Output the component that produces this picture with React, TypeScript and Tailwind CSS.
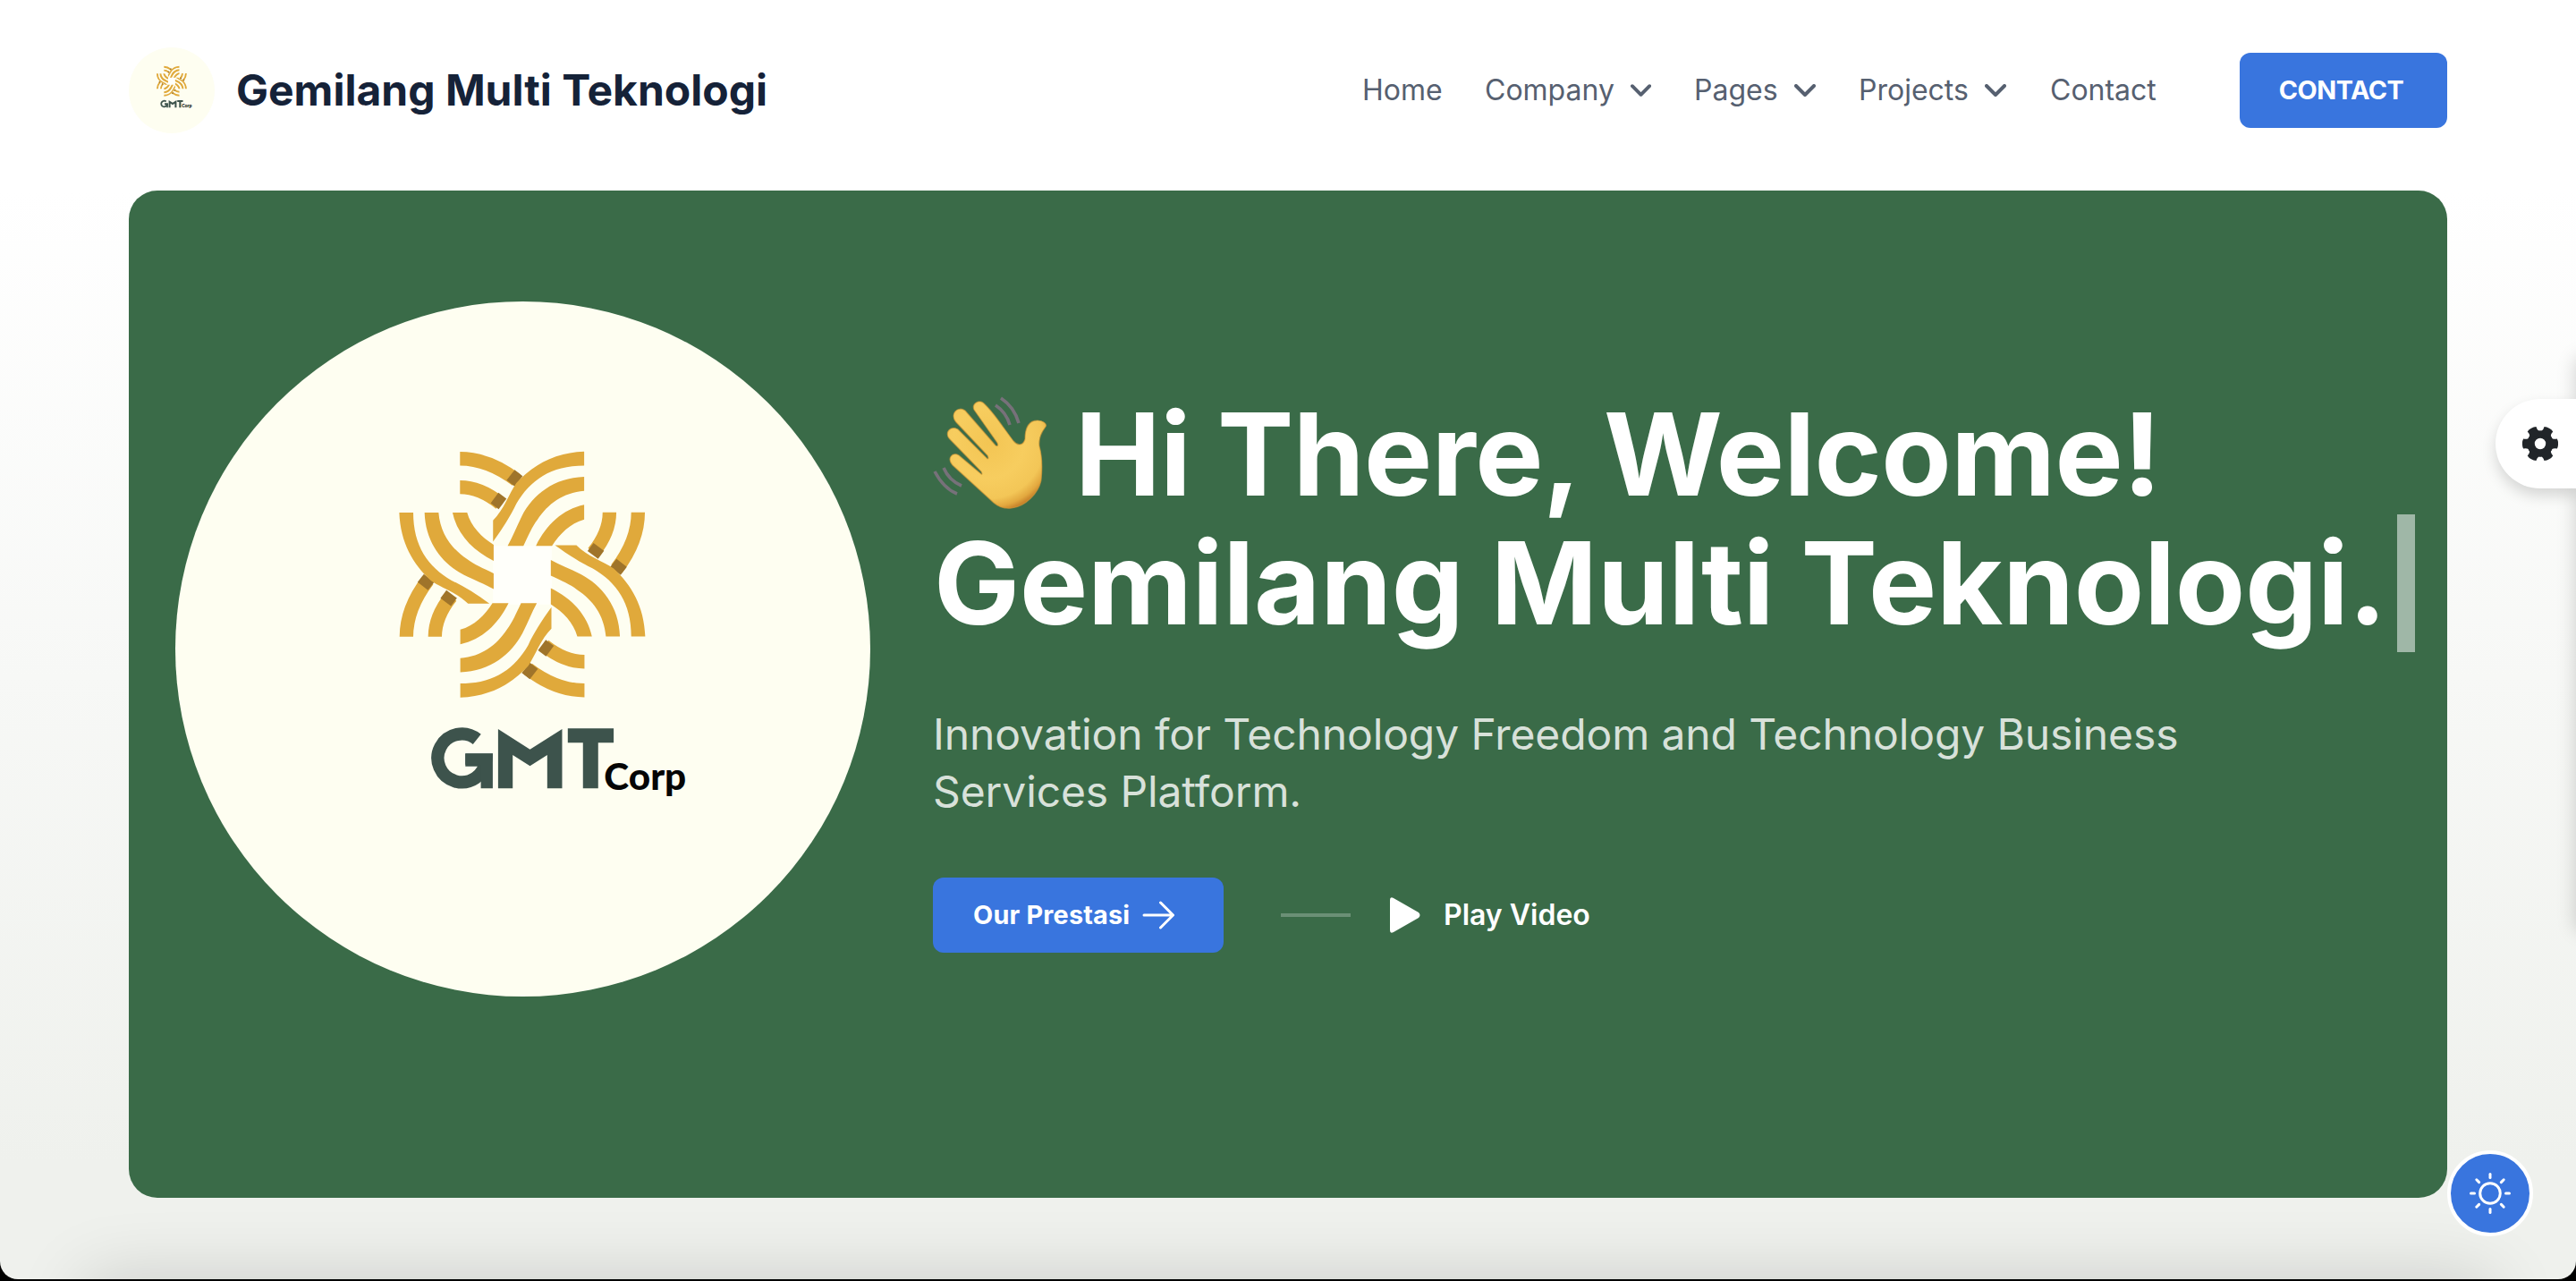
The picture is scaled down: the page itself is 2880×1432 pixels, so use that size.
import React from "react";

const GOLD = "#e0a93b";
const SHADE = "#9f742a";

function Petal({ angle }: { angle: number }) {
  return (
    <g transform={`rotate(${angle} 494 487)`}>
      <path d="M285 98C360 98 420 128 475 170" stroke={GOLD} strokeWidth="46" />
      <path d="M285 194C335 194 375 212 420 248" stroke={GOLD} strokeWidth="46" />
      <path d="M455 153L482 174" stroke={SHADE} strokeWidth="44" />
      <path d="M401 230L428 250" stroke={SHADE} strokeWidth="44" />
      <path d="M702 74C600 78 530 120 474 180C450 215 432 270 396 305L396 377C430 330 455 290 474 250C520 170 590 121 702 121Z" fill={GOLD} />
      <path d="M702 159C600 162 530 220 493 290C474 328 462 360 445 391L498 391C515 355 528 325 545 303C580 250 630 212 702 206Z" fill={GOLD} />
      <path d="M702 253C630 268 575 320 540 391L594 391C620 350 655 315 702 302Z" fill={GOLD} />
    </g>
  );
}

function Logo({ className }: { className: string }) {
  return (
    <svg viewBox="0 0 778 778" className={className} fill="none">
      <circle cx="389" cy="389" r="389" fill="#fefef1" />
      <g transform="translate(223.7 143.3) scale(0.33333)">
        <rect x="396" y="391" width="197" height="197" fill="#fffffa" />
        <Petal angle={0} />
        <Petal angle={90} />
        <Petal angle={180} />
        <Petal angle={270} />
        <path d="M342 1040A81 81 0 1 0 372 1110H303" stroke="#3d534c" strokeWidth="43" />
        <path d="M303 1088H395V1205H355V1125H303Z" fill="#3d534c" />
        <path d="M413 1006L520 1074L628 1006V1205H578V1093L520 1130L462 1093V1205H413Z" fill="#3d534c" />
        <path d="M647 1004H801V1052H749V1205H698V1052H647Z" fill="#3d534c" />
      </g>
      <text x="480" y="547" fontSize="41" fontWeight="900" fontFamily="Lato, sans-serif" fill="#050505" textLength="92" lengthAdjust="spacingAndGlyphs">Corp</text>
    </svg>
  );
}

function Chevron() {
  return (
    <svg viewBox="0 0 24 14" className="ml-[18px] h-[14px] w-6" fill="none" stroke="#566070" strokeWidth="4" strokeLinecap="round" strokeLinejoin="round">
      <path d="M2 2L12 12L22 2" />
    </svg>
  );
}

function Wave() {
  return (
    <svg viewBox="0 0 128 126" className="mb-1 h-[126px] w-32 shrink-0" fill="none">
      <defs>
        <radialGradient id="skin" gradientUnits="userSpaceOnUse" cx="62" cy="52" r="80">
          <stop offset="0" stopColor="#f3c553" />
          <stop offset="0.5" stopColor="#f7cd5f" />
          <stop offset="0.78" stopColor="#f3c657" />
          <stop offset="0.9" stopColor="#e2a83f" />
          <stop offset="1" stopColor="#bd7322" />
        </radialGradient>
      </defs>
      <g stroke="#77717a" strokeWidth="3.6">
        <path d="M76 2Q91 12 96 30" />
        <path d="M70 10Q82 18 86 32" />
        <path d="M2 84Q12 103 27 109" />
        <path d="M12 80Q18 94 32 100" />
      </g>
      <path d="M46 15C43 8 52 3 57 8C68 18 80 37 90 50C95 56 101 55 103 48C103 36 107 27 117 27C123 27 128 31 126 34C120 42 118 48 119 56C123 70 122 84 121 94C118 108 104 123 88 125C80 126 74 124 68 119L22 77C15 69 22 62 29 66L54 87Q56 88 54 84L19 48C12 41 20 32 28 37L61 70Q63 70 61 66L26 29C18 20 28 10 36 16L70 55Q74 57 72 52Z" fill="url(#skin)" stroke="#d99a35" strokeOpacity="0.6" strokeWidth="1.2" />
    </svg>
  );
}

const links = [
  { label: "Home", menu: false, cls: "w-[89px]" },
  { label: "Company", menu: true, cls: "w-[186px]" },
  { label: "Pages", menu: true, cls: "w-[136px]" },
  { label: "Projects", menu: true, cls: "w-[166px]" },
  { label: "Contact", menu: false, cls: "w-[121px]" },
];

export default function App() {
  return (
    <div className="h-[1432px] w-[2880px] overflow-hidden bg-black font-['Inter',sans-serif]">
      <div className="relative h-[1430px] overflow-hidden rounded-b-[20px] bg-[linear-gradient(180deg,#ffffff_0px,#ffffff_213px,#eff1ed_1300px)] px-36">
        <div className="absolute -bottom-[200px] left-24 right-24 h-[200px] shadow-[0_0_80px_rgba(0,0,0,0.16)]" />
        <header className="relative flex h-[213px] items-start justify-between">
          <div className="mt-[53px] flex h-24 items-center">
            <Logo className="size-24" />
            <span className="ml-6 text-[48px] leading-none font-bold whitespace-nowrap text-[#152238]">Gemilang Multi Teknologi</span>
          </div>
          <div className="mt-[59px] flex h-[84px] items-center">
            <nav className="mr-[91px] flex gap-12 text-[32px] text-[#566070]">
              {links.map((l) => (
                <a key={l.label} className={`flex items-center whitespace-nowrap ${l.cls}`}>
                  {l.label}
                  {l.menu && <Chevron />}
                </a>
              ))}
            </nav>
            <button className="h-[84px] w-[232px] rounded-[12px] bg-[#3975de] pr-[5px] text-[28.8px] font-bold tracking-[-0.5px] text-white">CONTACT</button>
          </div>
        </header>

        <main className="relative flex h-[1126px] rounded-[32px] bg-[#3a6b48] pl-[52px] text-white">
          <Logo className="mt-[124px] size-[777px] shrink-0" />
          <div className="ml-[70px] pt-[223px]">
            <h1 className="text-[128px] leading-[144px] font-bold whitespace-nowrap">
              <span className="flex h-36 items-center">
                <Wave />
                <span className="ml-[31px] tracking-[-0.55px]">Hi There, Welcome!</span>
              </span>
              <span className="flex h-36 items-center tracking-[-0.1px]">
                <span className="ml-px">Gemilang Multi Teknologi.</span>
                <span className="ml-3 h-[154px] w-5 shrink-0 bg-[#9fb7a7]" />
              </span>
            </h1>
            <p className="mt-[65px] w-[1500px] text-[48px] leading-[64px] tracking-[-0.11px] text-[#d8e1da]">
              Innovation for Technology Freedom and Technology Business
              <br />
              Services Platform.
            </p>
            <div className="mt-16 flex items-center">
              <button className="flex h-[84px] w-[325px] items-center rounded-[12px] bg-[#3975de] pl-[45px] text-[28.8px] font-bold tracking-[0.2px] whitespace-nowrap">
                Our Prestasi
                <svg viewBox="0 0 36 32" className="ml-3.5 h-8 w-9" fill="none" stroke="white" strokeWidth="3" strokeLinecap="round" strokeLinejoin="round">
                  <path d="M2 16H34M20.500 2L34.500 16L20.500 30" />
                </svg>
              </button>
              <span className="ml-16 h-1 w-[78px] bg-[#6b9076]" />
              <svg viewBox="0 0 34 40" className="ml-11 h-10 w-[34px]" fill="white">
                <path d="M0 3Q0-1 4 1L32 17Q35 20 32 23L4 39Q0 41 0 37Z" />
              </svg>
              <span className="ml-[26px] text-[32px] font-semibold whitespace-nowrap">Play Video</span>
            </div>
          </div>
        </main>

        <div className="absolute top-[400px] -right-40 h-[640px] w-40 shadow-[0_0_20px_rgba(0,0,0,0.18)]" />
        <div className="absolute top-[446px] right-0 flex h-[100px] w-[90px] items-center rounded-l-full bg-white pl-[30px] shadow-[0_8px_16px_rgba(0,0,0,0.15)]">
          <svg viewBox="-20 -20 40 40" className="size-10">
            <circle r="10.400" fill="none" stroke="#212529" strokeWidth="8.400" />
            {[0, 60, 120, 180, 240, 300].map((a) => (
              <path key={a} transform={`rotate(${a})`} d="M10-8.500Q12.500-8 13.500-5.800Q16-4.800 18.800-5.600Q20.200-3 20 0Q20.200 3 18.800 5.600Q16 4.800 13.500 5.800Q12.500 8 10 8.500Z" fill="#212529" />
            ))}
          </svg>
        </div>
        <div className="absolute right-12 bottom-12 flex size-24 items-center justify-center rounded-full border-4 border-white bg-[#3975de]">
          <svg viewBox="-24 -24 48 48" className="size-12" fill="none" stroke="white" strokeWidth="3" strokeLinecap="round">
            <circle r="11.300" />
            {[0, 45, 90, 135, 180, 225, 270, 315].map((a) => (
              <path key={a} transform={`rotate(${a})`} d="M17.500 0H21.500" />
            ))}
          </svg>
        </div>
      </div>
    </div>
  );
}
